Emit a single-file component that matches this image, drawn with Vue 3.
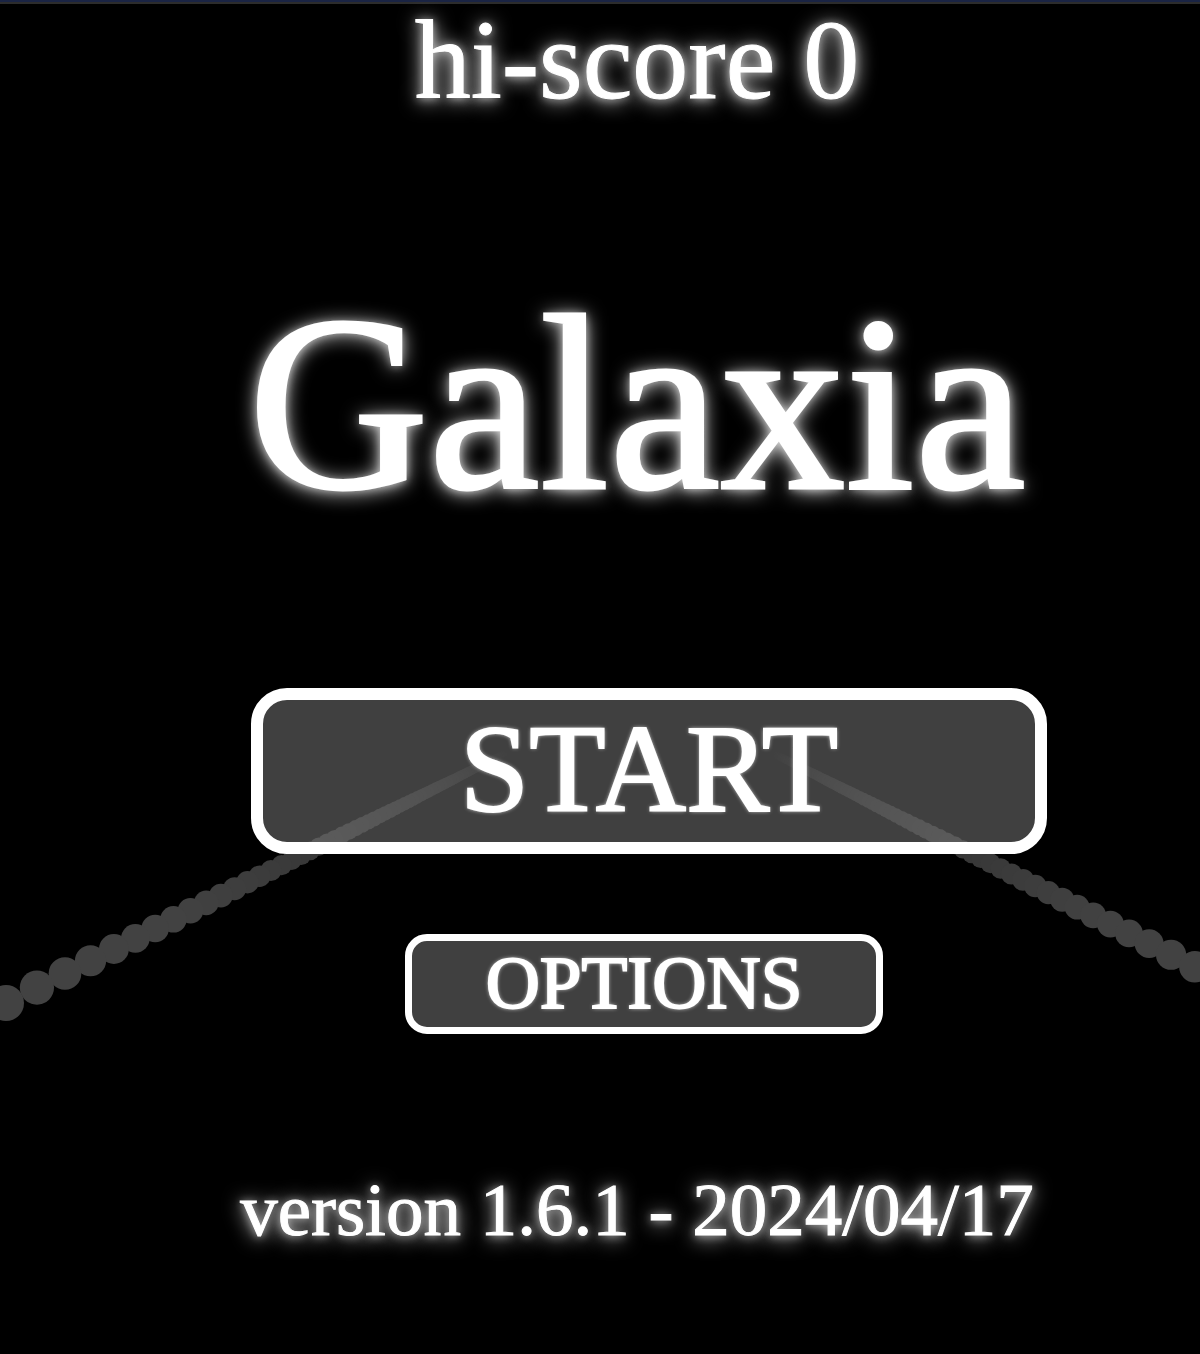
<template>
  <main class="screen">
    <svg class="trails" viewBox="0 0 1200 1354" aria-hidden="true">
      <circle
        v-for="dot in dots"
        :key="dot.id"
        :cx="dot.x"
        :cy="dot.y"
        :r="dot.r"
        :fill="dot.fill"
      />
    </svg>

    <div class="menu">
      <p class="hi-score">hi-score {{ hiScore }}</p>
      <h1 class="title">Galaxia</h1>
      <button type="button" class="btn btn-start">START</button>
      <button type="button" class="btn btn-options">OPTIONS</button>
      <p class="version">version {{ version }} - {{ releaseDate }}</p>
    </div>
  </main>
</template>

<script setup>
import { ref } from 'vue'

const hiScore = ref(0)
const version = '1.6.1'
const releaseDate = '2024/04/17'

// point where both shot trails vanish
const VANISH_X = 640
const VANISH_Y = 686
const FOCAL = 12363

function trail(side, nearest, slope) {
  const list = []
  for (let z = nearest; z < 92; z++) {
    const d = FOCAL / z
    const shade = Math.round(Math.min(66, 92 - z))
    list.push({
      id: `${side}:${z}`,
      x: VANISH_X + side * d,
      y: VANISH_Y + d * slope,
      r: d * 0.0284,
      fill: `rgb(${shade}, ${shade}, ${shade})`
    })
  }
  // far dots first so the near ones cover them
  return list.reverse()
}

const dots = [...trail(-1, 19.5, 0.5), ...trail(1, 22.28, 0.506)]
</script>

<style>
body {
  background: #000;
}
</style>

<style scoped>
.screen {
  position: relative;
  min-height: 100vh;
  box-sizing: border-box;
  background: #000;
  color: #fff;
  font-family: "Liberation Serif", "Times New Roman", serif;
  border-top: 2px solid #1a2444;
}

.screen::before {
  content: "";
  display: block;
  height: 2px;
  background: #2c2c2c;
}

.trails {
  position: absolute;
  top: -2px;
  left: 0;
  width: 100%;
}

.menu {
  position: relative;
  display: flex;
  flex-direction: column;
  align-items: center;
  padding-left: 74px;
}

.hi-score,
.title,
.version {
  margin: 0;
  font-weight: 400;
  white-space: nowrap;
  -webkit-text-stroke: 1px #fff;
  text-shadow: 0 1px 8px rgba(255, 255, 255, 0.6), 0 2px 20px #fff;
}

.hi-score {
  font-size: 112px;
  line-height: 112px;
}

.title {
  margin-top: 163px;
  font-size: 250px;
  line-height: 250px;
  -webkit-text-stroke-width: 3px;
}

.btn {
  box-sizing: border-box;
  max-width: 100%;
  border-style: solid;
  border-color: #fff;
  background: rgba(128, 128, 128, 0.5);
  color: #fff;
  font-family: inherit;
  text-shadow: 0 0 4px #fff;
  -webkit-text-stroke: 2px #fff;
  cursor: pointer;
}

.btn-start {
  width: 796px;
  margin: 159px 0 0 24px;
  padding: 7px 0 10px;
  border-width: 12px;
  border-radius: 36px;
  font-size: 125px;
  line-height: 125px;
}

.btn-options {
  width: 478px;
  margin: 80px 0 0 14px;
  padding: 4px 0 7px;
  border-width: 7px;
  border-radius: 22px;
  font-size: 75px;
  line-height: 75px;
}

.version {
  margin-top: 138px;
  font-size: 75px;
  line-height: 75px;
}
</style>
